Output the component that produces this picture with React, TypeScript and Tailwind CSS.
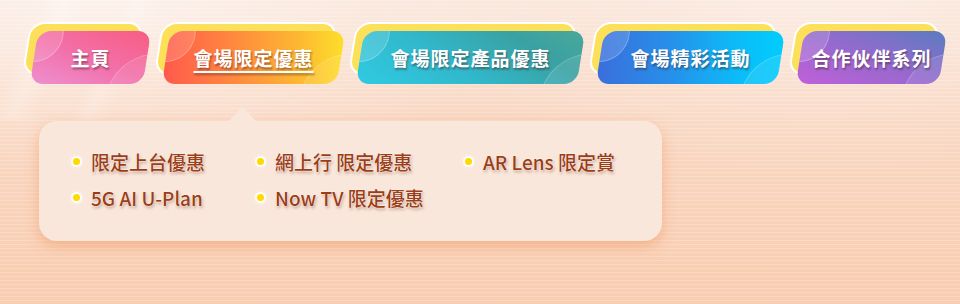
import React from "react";

type TabProps = {
  label: string;
  widthClass: string;
  bgClass: string;
  active?: boolean;
};

function Tab({ label, widthClass, bgClass, active }: TabProps) {
  return (
    <div className={`relative h-[53px] shrink-0 ${widthClass}`}>
      <div className="absolute left-[-8px] top-[-9px] w-[calc(100%+1px)] h-full rounded-[15px] border-[2.5px] border-white bg-[#fde05a] skew-x-[-9deg]" />
      <div
        className={`relative h-full w-full rounded-[13px] overflow-hidden skew-x-[-9deg] ${bgClass}`}
      >
        <div className="absolute left-[-26px] top-[-21px] w-[52px] h-[52px] rounded-full bg-white/15 border border-white/25" />
        <div className="absolute right-[-49px] bottom-[-54px] w-[84px] h-[84px] rounded-full bg-white/10 border border-white/20" />
        <div className="relative flex h-full w-full items-center justify-center skew-x-[9deg]">
          <span
            className={`text-[19px] font-bold tracking-[1px] text-white leading-none [text-shadow:1px_2px_2px_rgba(60,20,20,0.45)] ${
              active ? "underline decoration-2 underline-offset-[5px] decoration-white" : ""
            }`}
          >
            {label}
          </span>
        </div>
      </div>
    </div>
  );
}

function Item({ text }: { text: string }) {
  return (
    <div className="flex h-[36px] items-center">
      <span className="mr-[11px] block h-[7px] w-[7px] rounded-full bg-[#ffd900] shadow-[0_0_0_2px_rgba(255,255,255,0.85),0_0_4px_2px_rgba(255,255,255,0.6)]" />
      <span className="text-[19px] font-medium leading-none text-[#9c3d15] [text-shadow:0_0_1px_#fff,0_0_2px_#fff,1px_2px_3px_rgba(110,50,20,0.4)]">
        {text}
      </span>
    </div>
  );
}

export default function App() {
  return (
    <div className="relative h-[304px] w-[960px] overflow-hidden bg-[linear-gradient(180deg,#f9e2d5_0%,#f9d7c2_40%,#f9cdb0_100%)] font-['Noto_Sans_CJK_TC','Noto_Sans',sans-serif]">
      {/* light rays */}
      <div className="pointer-events-none absolute inset-0 bg-[radial-gradient(ellipse_at_10%_0%,rgba(255,255,255,0.55)_0%,rgba(255,255,255,0)_40%)]" />
      <div className="pointer-events-none absolute left-0 top-0 h-[120px] w-[360px] bg-[linear-gradient(115deg,rgba(255,255,255,0)_10%,rgba(255,255,255,0.22)_16%,rgba(255,255,255,0)_22%,rgba(255,255,255,0)_30%,rgba(255,255,255,0.18)_34%,rgba(255,255,255,0)_40%)]" />
      <div className="pointer-events-none absolute inset-0 bg-[radial-gradient(ellipse_at_85%_0%,rgba(255,255,255,0.35)_0%,rgba(255,255,255,0)_40%)]" />
      {/* stripes */}
      <div className="pointer-events-none absolute inset-0 bg-[repeating-linear-gradient(180deg,rgba(255,255,255,0.22)_0px,rgba(255,255,255,0.22)_1px,rgba(255,255,255,0)_1px,rgba(255,255,255,0)_4px)]" />

      <div className="relative">
        <nav className="flex gap-[19px] pl-[34px] pt-[31px]">
          <Tab
            label="主頁"
            widthClass="w-[113px]"
            bgClass="bg-[linear-gradient(20deg,#ee90d0_0%,#f26fa8_50%,#f85d82_100%)]"
          />
          <Tab
            label="會場限定優惠"
            widthClass="w-[175px]"
            bgClass="bg-[linear-gradient(80deg,#ff584c_0%,#ff8a3e_40%,#fdb832_75%,#fde02a_100%)]"
            active
          />
          <Tab
            label="會場限定產品優惠"
            widthClass="w-[221px]"
            bgClass="bg-[linear-gradient(30deg,#2fcbe2_0%,#31b8cc_40%,#3aa1a2_75%,#4aa89a_100%)]"
          />
          <Tab
            label="會場精彩活動"
            widthClass="w-[181px]"
            bgClass="bg-[linear-gradient(80deg,#3b6edb_0%,#2690ea_40%,#0cbcf8_75%,#00cdfd_100%)]"
          />
          <Tab
            label="合作伙伴系列"
            widthClass="w-[143px]"
            bgClass="bg-[linear-gradient(20deg,#c060d8_0%,#9a68cf_45%,#5a7cc0_100%)]"
          />
        </nav>

        <div className="relative ml-[39px] mt-[37px] h-[120px] w-[623px] rounded-[18px] bg-[#f9e7db] shadow-[0_5px_14px_rgba(236,140,80,0.45)]">
          <div className="absolute left-[190px] top-[-14px] h-[14px] w-[27px] bg-[#f9e7db] [clip-path:polygon(50%_0,100%_100%,0_100%)]" />
          <div className="grid grid-cols-[184px_208px_auto] pl-[34px] pt-[22px]">
            <Item text="限定上台優惠" />
            <Item text="網上行 限定優惠" />
            <Item text="AR Lens 限定賞" />
            <Item text="5G AI U-Plan" />
            <Item text="Now TV 限定優惠" />
          </div>
        </div>
      </div>
    </div>
  );
}
